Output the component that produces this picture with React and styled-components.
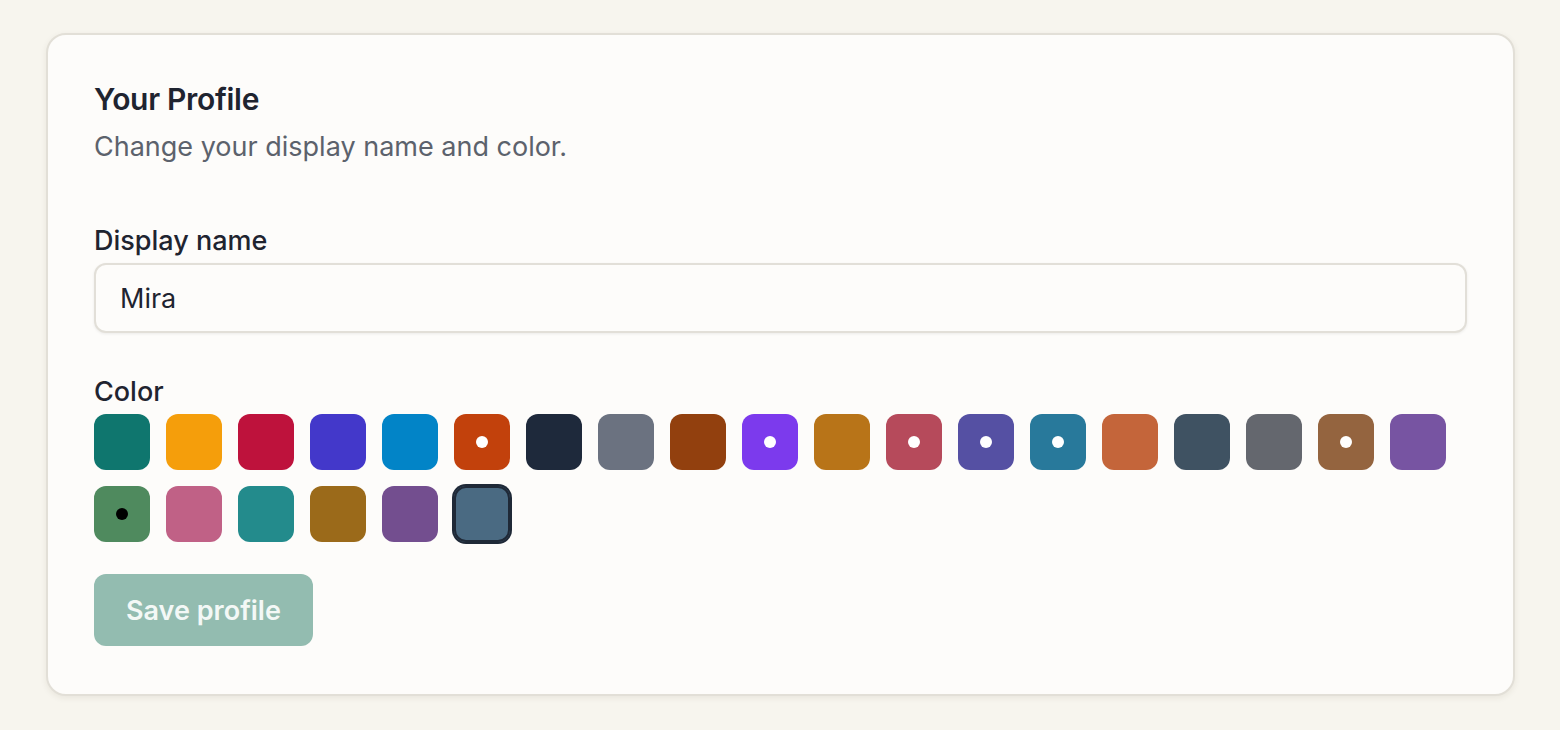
import React, { useState } from 'react';
import styled, { createGlobalStyle } from 'styled-components';

const GlobalStyle = createGlobalStyle`
  html, body {
    margin: 0;
    padding: 0;
    background: #f7f5ee;
  }
  body {
    font-family: Inter, "Noto Sans", "Liberation Sans", sans-serif;
    color: #1f2430;
  }
`;

const Page = styled.div`
  padding: 33px 45px 36px 46px;
`;

const Card = styled.section`
  background: #fdfcfa;
  border: 2px solid #e2dfd7;
  border-radius: 20px;
  box-shadow: 0 2px 6px rgba(60, 50, 30, 0.08);
  padding: 46px 46px 48px;
`;

const Title = styled.h2`
  margin: 0;
  font-size: 30px;
  line-height: 36px;
  font-weight: 600;
  letter-spacing: -0.3px;
  color: #1f2430;
`;

const Subtitle = styled.p`
  margin: 11px 0 0;
  font-size: 27px;
  line-height: 38px;
  color: #5c626c;
`;

const Field = styled.div`
  display: flex;
  flex-direction: column;
  gap: 3px;
  margin-top: ${p => p.$top}px;
`;

const Label = styled.label`
  font-size: 27px;
  line-height: 38px;
  font-weight: 500;
  color: #1f2430;
`;

const TextInput = styled.input`
  box-sizing: border-box;
  height: 70px;
  width: 100%;
  border: 2px solid #e2dfd8;
  border-radius: 12px;
  background: #fdfcfa;
  box-shadow: 0 1px 3px rgba(0, 0, 0, 0.07);
  padding: 0 24px;
  font-family: inherit;
  font-size: 27px;
  color: #1f2430;
  outline: none;
`;

const Swatches = styled.div`
  display: flex;
  flex-wrap: wrap;
  gap: 16px;
`;

const Swatch = styled.button`
  position: relative;
  box-sizing: border-box;
  width: 56px;
  height: 56px;
  padding: 0;
  border: none;
  border-radius: 12px;
  background: ${p => p.$color};
  cursor: pointer;
  box-shadow: ${p => (p.$selected ? '0 0 0 2px #1f2937, inset 0 0 0 2px #1f2937' : 'none')};

  &::after {
    content: '';
    display: ${p => (p.$dot ? 'block' : 'none')};
    position: absolute;
    left: 50%;
    top: 50%;
    width: 12px;
    height: 12px;
    margin: -6px 0 0 -6px;
    border-radius: 50%;
    background: ${p => p.$dot};
  }
`;

const SaveButton = styled.button`
  margin-top: 32px;
  height: 72px;
  padding: 0 32px;
  border: none;
  border-radius: 12px;
  background: #93bcb0;
  color: #f3f8f6;
  font-family: inherit;
  font-size: 27px;
  font-weight: 600;
  cursor: not-allowed;
`;

const colors = [
  { c: '#0f766e' },
  { c: '#f59e0b' },
  { c: '#be123c' },
  { c: '#4338ca' },
  { c: '#0284c7' },
  { c: '#c2410c', dot: '#fff' },
  { c: '#1e293b' },
  { c: '#6b7280' },
  { c: '#92400e' },
  { c: '#7c3aed', dot: '#fff' },
  { c: '#b87418' },
  { c: '#b64a5b', dot: '#fff' },
  { c: '#5550a3', dot: '#fff' },
  { c: '#28799b', dot: '#fff' },
  { c: '#c4653a' },
  { c: '#3f5262' },
  { c: '#64676e' },
  { c: '#94643f', dot: '#fff' },
  { c: '#7754a2' },
  { c: '#4f8a5e', dot: '#000' },
  { c: '#c06186' },
  { c: '#238b8c' },
  { c: '#9b6a1a' },
  { c: '#734e8f' },
  { c: '#4a6a82' },
];

export default function App() {
  const [name, setName] = useState('Mira');
  const [selected, setSelected] = useState(24);

  return (
    <>
      <GlobalStyle />
      <Page>
        <Card>
          <Title>Your Profile</Title>
          <Subtitle>Change your display name and color.</Subtitle>

          <Field $top={56}>
            <Label htmlFor="display-name">Display name</Label>
            <TextInput id="display-name" value={name} onChange={e => setName(e.target.value)} />
          </Field>

          <Field $top={40}>
            <Label>Color</Label>
            <Swatches>
              {colors.map((s, i) => (
                <Swatch
                  key={s.c}
                  $color={s.c}
                  $dot={s.dot}
                  $selected={i === selected}
                  onClick={() => setSelected(i)}
                  aria-label={s.c}
                />
              ))}
            </Swatches>
          </Field>

          <SaveButton disabled>Save profile</SaveButton>
        </Card>
      </Page>
    </>
  );
}
